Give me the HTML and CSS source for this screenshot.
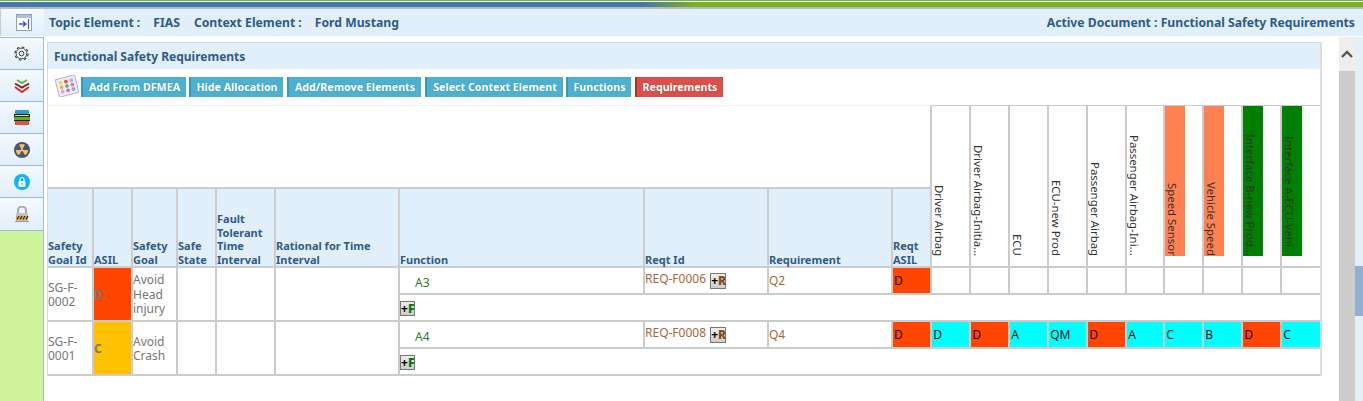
FILE: index.html
```html
<!DOCTYPE html>
<html lang="en">
<head>
<meta charset="utf-8">
<title>Functional Safety Requirements</title>
<link rel="stylesheet" href="styles.css">
</head>
<body>
<div class="topstrip"></div>
<header class="topicbar">
  <div class="navtoggle">
    <svg width="16" height="17" viewBox="0 0 16 17"><rect x="0.5" y="0.5" width="15" height="16" fill="#fff" stroke="#8f9fc8"/><rect x="1" y="1" width="14" height="3" fill="#b8c0cc"/><path d="M12.5 5v10" stroke="#3a56c8" stroke-width="1.2"/><path d="M3 10h6.5M7 7.5l3 2.5-3 2.5" fill="none" stroke="#3a56c8" stroke-width="1.3"/></svg>
  </div>
  <span class="topic-label">Topic Element :</span>
  <span class="topic-value">FIAS</span>
  <span class="topic-label context">Context Element :</span>
  <span class="topic-value">Ford Mustang</span>
  <span class="active-doc">Active Document : Functional Safety Requirements</span>
</header>
<div class="main">
  <nav class="sidebar">
    <div class="side-item"><svg width="15" height="15" viewBox="0 0 16 16"><circle cx="8" cy="8" r="7" fill="none" stroke="#333" stroke-width="1.200" stroke-dasharray="2.900 2.600"/><circle cx="8" cy="8" r="5.700" fill="none" stroke="#333" stroke-width=".9"/><circle cx="8" cy="8" r="2.500" fill="none" stroke="#333" stroke-width="1"/></svg></div>
    <div class="side-item"><svg width="16" height="14" viewBox="0 0 16 14"><path d="M3 1l5 3 5-3" fill="none" stroke="#6ab04c" stroke-width="2"/><path d="M1 4.500l7 4 7-4" fill="none" stroke="#7a2a20" stroke-width="2"/><path d="M1 8l7 5 7-5" fill="none" stroke="#e02a20" stroke-width="2"/></svg></div>
    <div class="side-item"><svg width="16" height="15" viewBox="0 0 16 15"><rect x="1" y="0" width="14" height="4" rx="1" fill="#2e9ad8"/><rect y="4" width="16" height="3" fill="#222"/><rect x="1" y="5" width="14" height="1" fill="#e8e860"/><rect y="7" width="16" height="3" fill="#5cb030"/><rect y="10" width="16" height="1" fill="#222"/><rect x="1" y="11" width="14" height="4" fill="#e0523a"/></svg></div>
    <div class="side-item"><svg width="16" height="16" viewBox="0 0 16 16"><circle cx="8" cy="8" r="8" fill="#4a5572"/><path d="M8 8L5 2.800A6 6 0 0 1 11 2.800zM8 8l6 0A6 6 0 0 1 11 13.200zM8 8L5 13.200A6 6 0 0 1 2 8z" fill="#f4c070"/><circle cx="8" cy="8" r="1.200" fill="#f4c070"/></svg></div>
    <div class="side-item"><svg width="16" height="16" viewBox="0 0 16 16"><circle cx="8" cy="8" r="8" fill="#0ab4fa"/><rect x="4.500" y="7" width="7" height="6" rx="1" fill="#fff"/><path d="M6 7V5.500a2 2 0 0 1 4 0V7" fill="none" stroke="#fff" stroke-width="1.200"/><rect x="7.500" y="9" width="1" height="2" fill="#0ab4fa"/></svg></div>
    <div class="side-item"><svg width="14" height="16" viewBox="0 0 14 16"><path d="M3 8V4.500a4 4 0 0 1 8 0V8" fill="none" stroke="#a8a8a8" stroke-width="2"/><rect x="1" y="7" width="12" height="8" fill="#c4c4c4"/><rect x="1" y="10" width="12" height="3.500" fill="#e8b030"/><path d="M2 13.500l2-3.500M5 13.500l2-3.500M8 13.500l2-3.500M11 13.500l2-3.500" stroke="#222" stroke-width="1.200"/><rect y="15" width="14" height="1" fill="#999"/></svg></div>
    <div class="side-fill"></div>
  </nav>
  <section class="panel">
    <h1 class="panel-title">Functional Safety Requirements</h1>
    <div class="toolbar">
      <svg class="palette" width="24" height="22" viewBox="0 0 24 22"><g transform="rotate(-14 12 11)"><rect x="2" y="2" width="20" height="18" rx="1" fill="#eeeef6" stroke="#b8b0c0"/><circle cx="6.500" cy="6.500" r="1.900" fill="#f0d860"/><circle cx="12" cy="6.500" r="1.900" fill="#ee5050"/><circle cx="17.500" cy="6.500" r="1.900" fill="#b0b0f0"/><circle cx="6.500" cy="11" r="1.900" fill="#f0b050"/><circle cx="12" cy="11" r="1.900" fill="#50c050"/><circle cx="17.500" cy="11" r="1.900" fill="#f070b0"/><circle cx="6.500" cy="15.500" r="1.900" fill="#d8a0e8"/><circle cx="12" cy="15.500" r="1.900" fill="#f060d0"/><circle cx="17.500" cy="15.500" r="1.900" fill="#70b0f0"/></g></svg>
      <button class="btn btn-info add-dfmea">Add From DFMEA</button>
      <button class="btn btn-info hide-alloc">Hide Allocation</button>
      <button class="btn btn-info add-remove">Add/Remove Elements</button>
      <button class="btn btn-info select-ctx">Select Context Element</button>
      <button class="btn btn-info functions">Functions</button>
      <button class="btn btn-danger requirements">Requirements</button>
    </div>
    <table class="grid">
      <colgroup>
        <col class="w46"><col class="w39"><col class="w45"><col class="w39"><col class="w59"><col class="w124"><col class="w245"><col class="w124"><col class="w124"><col class="w39">
        <col class="w39"><col class="w39"><col class="w39"><col class="w39"><col class="w39"><col class="w38"><col class="w39"><col class="w39"><col class="w39"><col class="w38">
      </colgroup>
      <thead>
        <tr class="blank-row">
          <th class="blank" colspan="10"></th>
          <th class="vert" rowspan="2"><span class="vtext">Driver Airbag</span></th>
          <th class="vert" rowspan="2"><span class="vtext">Driver Airbag-Initia...</span></th>
          <th class="vert" rowspan="2"><span class="vtext">ECU</span></th>
          <th class="vert" rowspan="2"><span class="vtext">ECU-new Prod</span></th>
          <th class="vert" rowspan="2"><span class="vtext">Passenger Airbag</span></th>
          <th class="vert" rowspan="2"><span class="vtext">Passenger Airbag-Ini...</span></th>
          <th class="vert" rowspan="2"><span class="vtext coral">Speed Sensor</span></th>
          <th class="vert" rowspan="2"><span class="vtext coral">Vehicle Speed</span></th>
          <th class="vert" rowspan="2"><span class="vtext green">Interface B-new Prod...</span></th>
          <th class="vert last" rowspan="2"><span class="vtext green">Interface A-ECU-Vehi...</span></th>
        </tr>
        <tr class="head-row">
          <th>Safety Goal Id</th><th>ASIL</th><th>Safety Goal</th><th>Safe State</th><th>Fault Tolerant Time Interval</th><th>Rational for Time Interval</th><th>Function</th><th>Reqt Id</th><th>Requirement</th><th>Reqt ASIL</th>
        </tr>
      </thead>
      <tbody>
        <tr class="row">
          <td rowspan="2">SG-F-0002</td><td rowspan="2" class="asil asil-d">D</td><td rowspan="2">Avoid Head injury</td><td rowspan="2"></td><td rowspan="2"></td><td rowspan="2"></td>
          <td class="func">A3</td>
          <td class="req">REQ-F0006 <span class="mini mini-lg">+<b class="mini-r">R</b></span></td>
          <td class="req q">Q2</td>
          <td class="lvl red">D</td>
          <td></td><td></td><td></td><td></td><td></td><td></td><td></td><td></td><td></td><td class="last"></td>
        </tr>
        <tr class="row">
          <td colspan="14" class="last add-cell"><span class="mini">+<b class="mini-f">F</b></span></td>
        </tr>
        <tr class="row">
          <td rowspan="2">SG-F-0001</td><td rowspan="2" class="asil asil-c">C</td><td rowspan="2">Avoid Crash</td><td rowspan="2"></td><td rowspan="2"></td><td rowspan="2"></td>
          <td class="func">A4</td>
          <td class="req">REQ-F0008 <span class="mini mini-lg">+<b class="mini-r">R</b></span></td>
          <td class="req q">Q4</td>
          <td class="lvl red">D</td>
          <td class="lvl cyan">D</td><td class="lvl red">D</td><td class="lvl cyan">A</td><td class="lvl cyan">QM</td><td class="lvl red">D</td><td class="lvl cyan">A</td><td class="lvl cyan">C</td><td class="lvl cyan">B</td><td class="lvl red">D</td><td class="lvl cyan last">C</td>
        </tr>
        <tr class="row">
          <td colspan="14" class="last add-cell"><span class="mini">+<b class="mini-f">F</b></span></td>
        </tr>
      </tbody>
    </table>
  </section>
  <div class="scroll-outer">
    <div class="scroll-up"><svg width="12" height="8" viewBox="0 0 12 8"><path d="M1 7l5-5 5 5" fill="none" stroke="#555" stroke-width="2.400"/></svg></div>
    <div class="scroll-track"></div>
  </div>
  <div class="scroll-inner"><div class="scroll-thumb"></div></div>
</div>
</body>
</html>
```
FILE: styles.css
```css
* { box-sizing: border-box; }
html, body { margin: 0; padding: 0; height: 401px; overflow: hidden; background: #fff; }
body { font-family: "Noto Sans", "DejaVu Sans", sans-serif; font-size: 12px; color: #777; display: flex; flex-direction: column; }

.topstrip {
  height: 9px; flex: none;
  border-top: 1px solid #6cb33f;
  border-bottom: 2px solid #b0bcc4;
  background: linear-gradient(90deg, #4577ab 0, #4577ab 47%, #7fae1e 51%, #7fae1e 100%);
  box-shadow: inset 0 1px 0 #fff;
}

.topicbar {
  height: 27px; flex: none;
  display: flex; align-items: center;
  background: #e1effb;
  color: #2f5b88; font-weight: 700; font-size: 12.2px; line-height: 29px;
}
.navtoggle {
  width: 44px; height: 27px; flex: none;
  display: flex; align-items: center; padding-left: 15px;
  background: linear-gradient(180deg, #f4f9fd, #e1effb);
  border-left: 1px solid #ccc;
}
.topic-label { margin-left: 5px; }
.topic-value { margin-left: 13px; }
.topic-label.context { margin-left: 14px; }
.active-doc { margin-left: auto; margin-right: 8px; }

.main { flex: 1; display: flex; min-height: 0; padding-top: 1px; }

.sidebar { width: 44px; flex: none; display: flex; flex-direction: column; border-right: 1px solid #a0bcd8; }
.side-item {
  height: 32px; flex: none;
  display: flex; align-items: center; justify-content: center;
  background: linear-gradient(180deg, #f4f9fd, #e1effb);
  border-bottom: 1px solid #9dbbd6;
}
.side-item:first-child { border-top: 1px solid #9dbbd6; height: 33px; }
.side-item:nth-child(6) { height: 33px; }
.side-fill { flex: 1; background: #d0f49a; }

.panel {
  width: 1275px; height: 334px; flex: none;
  margin: 5px 0 0 3px;
  border: 1px solid #d5d8dc; border-bottom: 0; border-right: 2px solid #ddd;
}
.panel-title {
  margin: 0; height: 26px;
  display: flex; align-items: center; padding-left: 6px;
  background: #e1effb;
  color: #2f5b88; font-size: 12px; font-weight: 700;
}
.toolbar { height: 36px; display: flex; align-items: flex-start; padding: 8px 0 0 7px; }
.palette { margin-top: -2px; flex: none; }
.btn {
  height: 20px; padding: 0; flex: none;
  border: 0; border-left: 2px solid;
  color: #fff; font: 700 10.7px "Noto Sans", "DejaVu Sans", sans-serif;
  text-shadow: 0 0 1px rgba(0, 0, 0, .25);
}
.btn-info { background: #4bb1cf; border-color: #3b97b3; }
.btn-danger { background: #da4f49; border-color: #b0302b; }
.add-dfmea { width: 105px; margin-left: 2px; }
.hide-alloc { width: 94px; margin-left: 3px; }
.add-remove { width: 134px; margin-left: 4px; }
.select-ctx { width: 138px; margin-left: 4px; }
.functions { width: 65px; margin-left: 3px; }
.requirements { width: 88px; margin-left: 4px; }

.grid { border-collapse: separate; border-spacing: 0; table-layout: fixed; width: 1272px; }
.w46 { width: 46px; } .w39 { width: 39px; } .w45 { width: 45px; } .w59 { width: 59px; }
.w124 { width: 124px; } .w245 { width: 245px; } .w38 { width: 38px; }

.grid th, .grid td {
  padding: 0; border-right: 2px solid #ccc; border-bottom: 2px solid #ccc;
}
.grid .last { border-right: 0; }
.blank-row th.blank { height: 84px; border-right: 2px solid #ccc; border-top: 1px solid #f2f2f2; background: #fff; }
.head-row th {
  height: 79px; background: #e1effb; vertical-align: bottom; text-align: left;
  color: #2f5b88; font-size: 11px; font-weight: 700; line-height: 13.400px;
}
.grid th.vert { vertical-align: top; background: #fff; border-top: 1px solid #ccc; font-weight: 400; color: #333; }
.vtext {
  display: block; width: 20px; height: 150px; padding-right: 5px;
  writing-mode: vertical-rl; text-align: right; white-space: nowrap;
  font-size: 11.400px; line-height: 15px; overflow: hidden;
}
.coral { background: #ff8050; }
.green { background: #008000; }

.row td { height: 27px; }
.row td[rowspan] { padding-top: 2px; line-height: 14.500px; }
.grid .asil { font-weight: 700; color: #777; }
.asil-d { background: #ff4500; }
.asil-c { background: #ffc000; }
.func { padding: 3px 0 0 15px !important; color: #2e7d2e; }
.req { color: #a8683a; line-height: 16px; vertical-align: top; padding-top: 3px !important; }
.req.q { padding-top: 5px !important; }
.lvl { color: #111; padding-left: 1px !important; }
.red { background: #ff4500; }
.cyan { background: #0ff; }
.grid .add-cell { vertical-align: top; padding-top: 6px; }

.mini {
  display: inline-block; width: 15px; height: 15px;
  border: 1px solid #777;
  background: linear-gradient(180deg, #eee, #ccc);
  color: #000; font-weight: 700; font-size: 12px; line-height: 13px; text-align: center;
  vertical-align: top;
}
.mini-lg { width: 16px; height: 16px; margin: 2px 0 0 1px; }
.mini-f { color: #0a7a0a; }
.mini-r { color: #8b4a12; }

.scroll-outer { width: 16px; flex: none; margin-left: 17px; display: flex; flex-direction: column; }
.scroll-up { height: 34px; background: #eee; display: flex; align-items: center; justify-content: center; }
.scroll-track { flex: 1; background: #ccc; }
.scroll-inner { width: 8px; flex: none; background: #e4eff8; padding-top: 229px; }
.scroll-thumb { height: 50px; background: #8fb0d0; }
```
